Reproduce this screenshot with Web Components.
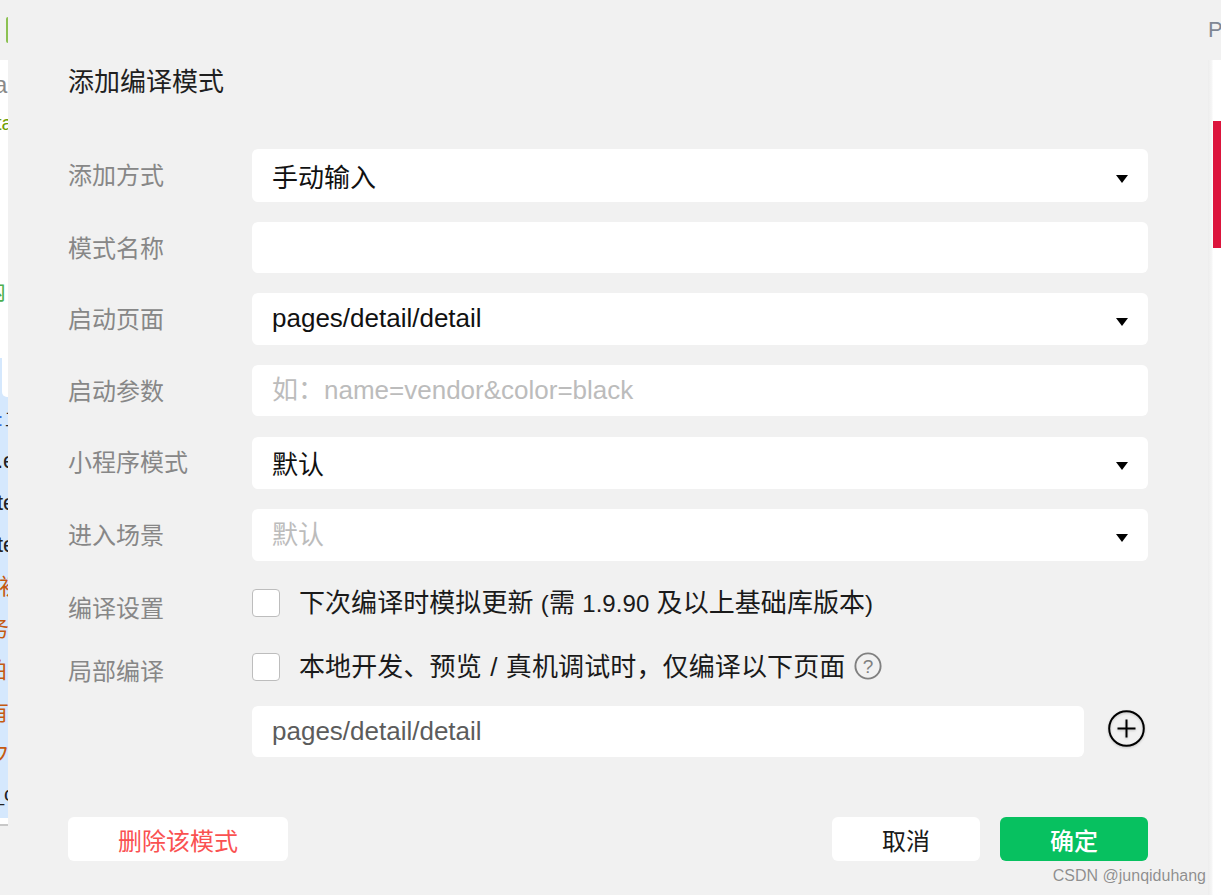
<!DOCTYPE html>
<html lang="zh">
<head>
<meta charset="utf-8">
<title>添加编译模式</title>
<style>
html, body { margin: 0; padding: 0; height: 100%; background: #f1f1f1; }
body { font-family: "Liberation Sans", "Noto Sans CJK SC", sans-serif; overflow: hidden; }
.num { font-size: 24px; }
.wide { letter-spacing: .12px; word-spacing: 1px; }
.tiny { letter-spacing: .06px; }
</style>
</head>
<body>
<mode-page>
    <span slot="title">添加编译模式</span>
    <form-row label="添加方式" h="53"><select-field value="手动输入"></select-field></form-row>
    <form-row label="模式名称" h="51" shift="1"><text-field></text-field></form-row>
    <form-row label="启动页面" h="52" shift="1"><select-field value="pages/detail/detail" up="2"></select-field></form-row>
    <form-row label="启动参数" h="51" shift="1"><text-field placeholder="如：name=vendor&amp;color=black" up="6"></text-field></form-row>
    <form-row label="小程序模式" h="52" gap="21"><select-field value="默认" up="2"></select-field></form-row>
    <form-row label="进入场景" h="52" shift="1"><select-field placeholder="默认" up="6"></select-field></form-row>
    <form-row label="编译设置" h="28" gap="24" shift="6"><check-line><span class="tiny">下次编译时模拟更新 <span class="num">(</span>需 <span class="num">1.9.90</span> 及以上基础库版本<span class="num">)</span></span></check-line></form-row>
    <form-row label="局部编译" h="28" gap="36" shift="5"><check-line help><span class="wide">本地开发、预览 / 真机调试时，仅编译以下页面</span></check-line></form-row>
    <form-row h="51" gap="25" style="margin-top:25px"><path-field value="pages/detail/detail"></path-field></form-row>
</mode-page>

<script>
const cjk = `"Liberation Sans", "Noto Sans CJK SC", sans-serif`;

class LeftStrip extends HTMLElement {
    constructor() {
        super();
        this.attachShadow({ mode: 'open' });
    }
    connectedCallback() {
        this.shadowRoot.innerHTML = `
        <style>
        :host { display: flex; flex-direction: column; flex: none; width: 8px; height: 100%; overflow: hidden; background: #f1f1f1; font: 22px ${cjk}; }
        .top { height: 60px; flex: none; padding-top: 17px; box-sizing: border-box; }
        .tick { display: block; width: 2px; height: 26px; margin-left: 6px; background: #8cc152; border-radius: 2px 0 0 2px; }
        .white { height: 298px; flex: none; background: #fff; white-space: nowrap; }
        .blue { height: 460px; flex: none; background: #d5e8fd; white-space: nowrap; }
        .tab { height: 39px; margin-left: 2px; background: #fff; border-radius: 0 0 0 5px; }
        .foot { height: 6px; flex: none; background: #fff; }
        .rule { height: 2px; flex: none; background: #c8c8c8; }
        .ln { height: 42px; line-height: 42px; overflow: hidden; color: #222; }
        .ln span { display: inline-block; }
        .or { color: #c55a11; }
        </style>
        <div class="top"><i class="tick"></i></div>
        <div class="white">
            <div class="ln" style="height:50px;line-height:50px;color:#8a8a8a"><span style="margin-left:-6px;font-size:24px">a</span></div>
            <div class="ln" style="height:40px;line-height:26px;color:#6f9e00"><span style="margin-left:-4px;font-size:20px">ta</span></div>
            <div style="height:121px"></div>
            <div class="ln" style="color:#4caf50"><span style="margin-left:-16px">内</span></div>
        </div>
        <div class="blue">
            <div class="tab"></div>
            <div style="height:1px"></div>
            <div class="ln"><span style="margin-left:-2px;font-size:18px"><b style="font-weight:400;color:#3a6fd8">:</b><b style="font-weight:400;margin-left:2px">工</b></span></div>
            <div class="ln"><span style="margin-left:-3px">.e</span></div>
            <div class="ln"><span style="margin-left:-3px">te</span></div>
            <div class="ln"><span style="margin-left:-3px">te</span></div>
            <div class="ln or"><span style="margin-left:-1px">初</span></div>
            <div class="ln or"><span style="margin-left:-13px">务</span></div>
            <div class="ln or"><span style="margin-left:-15px">拍</span></div>
            <div class="ln or"><span style="margin-left:-13px">有</span></div>
            <div class="ln or"><span style="margin-left:-12px">フ</span></div>
            <div class="ln" style="line-height:36px"><span style="margin-left:-7px;font-size:20px">_c</span></div>
        </div>
        <div class="foot"></div>
        <div class="rule"></div>
        `;
    }
}
customElements.define('left-strip', LeftStrip);

class RightStrip extends HTMLElement {
    constructor() {
        super();
        this.attachShadow({ mode: 'open' });
    }
    connectedCallback() {
        this.shadowRoot.innerHTML = `
        <style>
        :host { display: flex; flex-direction: column; flex: 1; height: 100%; overflow: hidden; background: #f1f1f1; }
        .top { height: 60px; flex: none; font: 22px/60px "Liberation Sans", sans-serif; color: #7f8794; }
        .body { flex: 1; background: linear-gradient(to right, #ededed, #f6f6f6 4px, #fff 5px); padding: 61px 0 0 5px; }
        .bar { height: 127px; background: #dc143c; }
        </style>
        <div class="top">P</div>
        <div class="body"><div class="bar"></div></div>
        `;
    }
}
customElements.define('right-strip', RightStrip);

class ModePage extends HTMLElement {
    constructor() {
        super();
        this.attachShadow({ mode: 'open' });
    }
    connectedCallback() {
        this.shadowRoot.innerHTML = `
        <style>
        :host { display: flex; height: 895px; width: 1221px; position: relative; overflow: hidden; }
        .dialog { width: 1200px; flex: none; box-sizing: border-box; height: 100%; padding: 0 60px; background: #f1f1f1; display: flex; flex-direction: column; }
        .title { height: 149px; flex: none; padding-top: 63px; box-sizing: border-box; font-size: 26px; line-height: 38px; color: #1f1f1f; }
        .rows { display: flex; flex-direction: column; height: 668px; flex: none; }
        .actions { display: flex; align-items: center; gap: 20px; }
        .spacer { flex: 1; }
        .mark { position: absolute; right: 15px; bottom: 9px; font: 16px/20px "Liberation Sans", sans-serif; color: #8f8f8f; text-shadow: 0 0 1px #fff; }
        </style>
        <left-strip></left-strip>
        <section class="dialog">
            <div class="title"><slot name="title"></slot></div>
            <div class="rows"><slot></slot></div>
            <div class="actions">
                <flat-button kind="danger" style="width:220px">删除该模式</flat-button>
                <div class="spacer"></div>
                <flat-button style="width:148px">取消</flat-button>
                <flat-button kind="primary" style="width:148px">确定</flat-button>
            </div>
        </section>
        <right-strip></right-strip>
        <div class="mark">CSDN @junqiduhang</div>
        `;
    }
}
customElements.define('mode-page', ModePage);

class FormRow extends HTMLElement {
    constructor() {
        super();
        this.attachShadow({ mode: 'open' });
    }
    connectedCallback() {
        const h = this.getAttribute('h') || 52;
        const gap = this.getAttribute('gap') || 20;
        const shift = this.getAttribute('shift') || 0;
        const first = this.previousElementSibling === null || this.previousElementSibling.slot === 'title';
        this.shadowRoot.innerHTML = `
        <style>
        :host { display: grid; grid-template-columns: 184px 1fr; align-items: center; height: ${h}px; margin-top: ${first ? 0 : gap}px; flex: none; }
        .label { font-size: 24px; color: #878787; line-height: 36px; white-space: nowrap; transform: translateY(${shift}px); }
        </style>
        <div class="label">${this.getAttribute('label') || ''}</div>
        <div><slot></slot></div>
        `;
    }
}
customElements.define('form-row', FormRow);

class SelectField extends HTMLElement {
    constructor() {
        super();
        this.attachShadow({ mode: 'open' });
    }
    connectedCallback() {
        const value = this.getAttribute('value');
        const hint = this.getAttribute('placeholder');
        const up = this.getAttribute('up') || 0;
        this.shadowRoot.innerHTML = `
        <style>
        :host { display: flex; align-items: center; justify-content: space-between; height: var(--field-h, 52px); padding: 0 20px; background: #fff; border-radius: 6px; font-size: 26px; color: #111; }
        span { padding-bottom: ${up}px; }
        .hint { color: #bcbcbc; }
        svg { display: block; margin-top: 6px; }
        </style>
        <span class="${value ? '' : 'hint'}">${value || hint}</span>
        <svg width="12" height="8" viewBox="0 0 12 8"><path d="M0 0h12L6 8z" fill="#000"/></svg>
        `;
        this.style.setProperty('--field-h', this.parentElement.getAttribute('h') + 'px');
    }
}
customElements.define('select-field', SelectField);

class TextField extends HTMLElement {
    constructor() {
        super();
        this.attachShadow({ mode: 'open' });
    }
    connectedCallback() {
        const hint = this.getAttribute('placeholder') || '';
        const up = this.getAttribute('up') || 0;
        this.shadowRoot.innerHTML = `
        <style>
        :host { display: flex; align-items: center; height: var(--field-h, 51px); padding: 0 20px; background: #fff; border-radius: 6px; font-size: 26px; color: #bcbcbc; }
        span { padding-bottom: ${up}px; }
        </style>
        <span>${hint.replace('&', '&amp;')}</span>
        `;
        this.style.setProperty('--field-h', this.parentElement.getAttribute('h') + 'px');
    }
}
customElements.define('text-field', TextField);

class CheckLine extends HTMLElement {
    constructor() {
        super();
        this.attachShadow({ mode: 'open' });
    }
    connectedCallback() {
        const help = this.hasAttribute('help') ? `
        <svg class="help" width="28" height="28" viewBox="0 0 28 28">
            <circle cx="14" cy="14" r="12.6" fill="none" stroke="#808080" stroke-width="1.9"/>
            <text x="14" y="20.5" text-anchor="middle" font-size="19" fill="#808080" font-family="Liberation Sans">?</text>
        </svg>` : '';
        this.shadowRoot.innerHTML = `
        <style>
        :host { display: flex; align-items: center; height: 28px; font-size: 26px; color: #1a1a1a; white-space: nowrap; }
        .box { width: 28px; height: 28px; box-sizing: border-box; background: #fff; border: 1px solid #bdbdbd; border-radius: 4px; margin-right: 19px; flex: none; }
        .txt { padding-bottom: 6px; }
        .help { margin-left: 9px; margin-top: -2px; flex: none; }
        </style>
        <span class="box"></span>
        <span class="txt"><slot></slot></span>
        ${help}
        `;
    }
}
customElements.define('check-line', CheckLine);

class PathField extends HTMLElement {
    constructor() {
        super();
        this.attachShadow({ mode: 'open' });
    }
    connectedCallback() {
        this.shadowRoot.innerHTML = `
        <style>
        :host { display: flex; align-items: center; gap: 24px; padding-top: 4px; }
        .input { flex: 1; height: 51px; display: flex; align-items: center; padding: 0 20px; background: #fff; border-radius: 6px; font-size: 26px; color: #5c5c5c; }
        svg { display: block; flex: none; margin-right: 3px; margin-top: -7px; filter: drop-shadow(0 1px 1px rgba(0,0,0,.2)); }
        </style>
        <div class="input">${this.getAttribute('value')}</div>
        <svg width="37" height="37" viewBox="0 0 37 37">
            <circle cx="18.5" cy="18.500" r="17.3" fill="none" stroke="#000" stroke-width="2"/>
            <path d="M9.500 18.500h18M18.500 9.500v18" stroke="#000" stroke-width="2" fill="none"/>
        </svg>
        `;
    }
}
customElements.define('path-field', PathField);

class FlatButton extends HTMLElement {
    constructor() {
        super();
        this.attachShadow({ mode: 'open' });
    }
    connectedCallback() {
        const kind = this.getAttribute('kind');
        const color = kind === 'danger' ? '#fa5151' : kind === 'primary' ? '#fff' : '#1a1a1a';
        const bg = kind === 'primary' ? '#07c160' : '#fff';
        const weight = kind === 'primary' ? 500 : 400;
        this.shadowRoot.innerHTML = `
        <style>
        :host { display: flex; align-items: center; justify-content: center; height: 44px; flex: none; background: ${bg}; color: ${color}; font-size: 24px; font-weight: ${weight}; border-radius: 6px; }
        </style>
        <slot></slot>
        `;
    }
}
customElements.define('flat-button', FlatButton);
</script>
</body>
</html>
